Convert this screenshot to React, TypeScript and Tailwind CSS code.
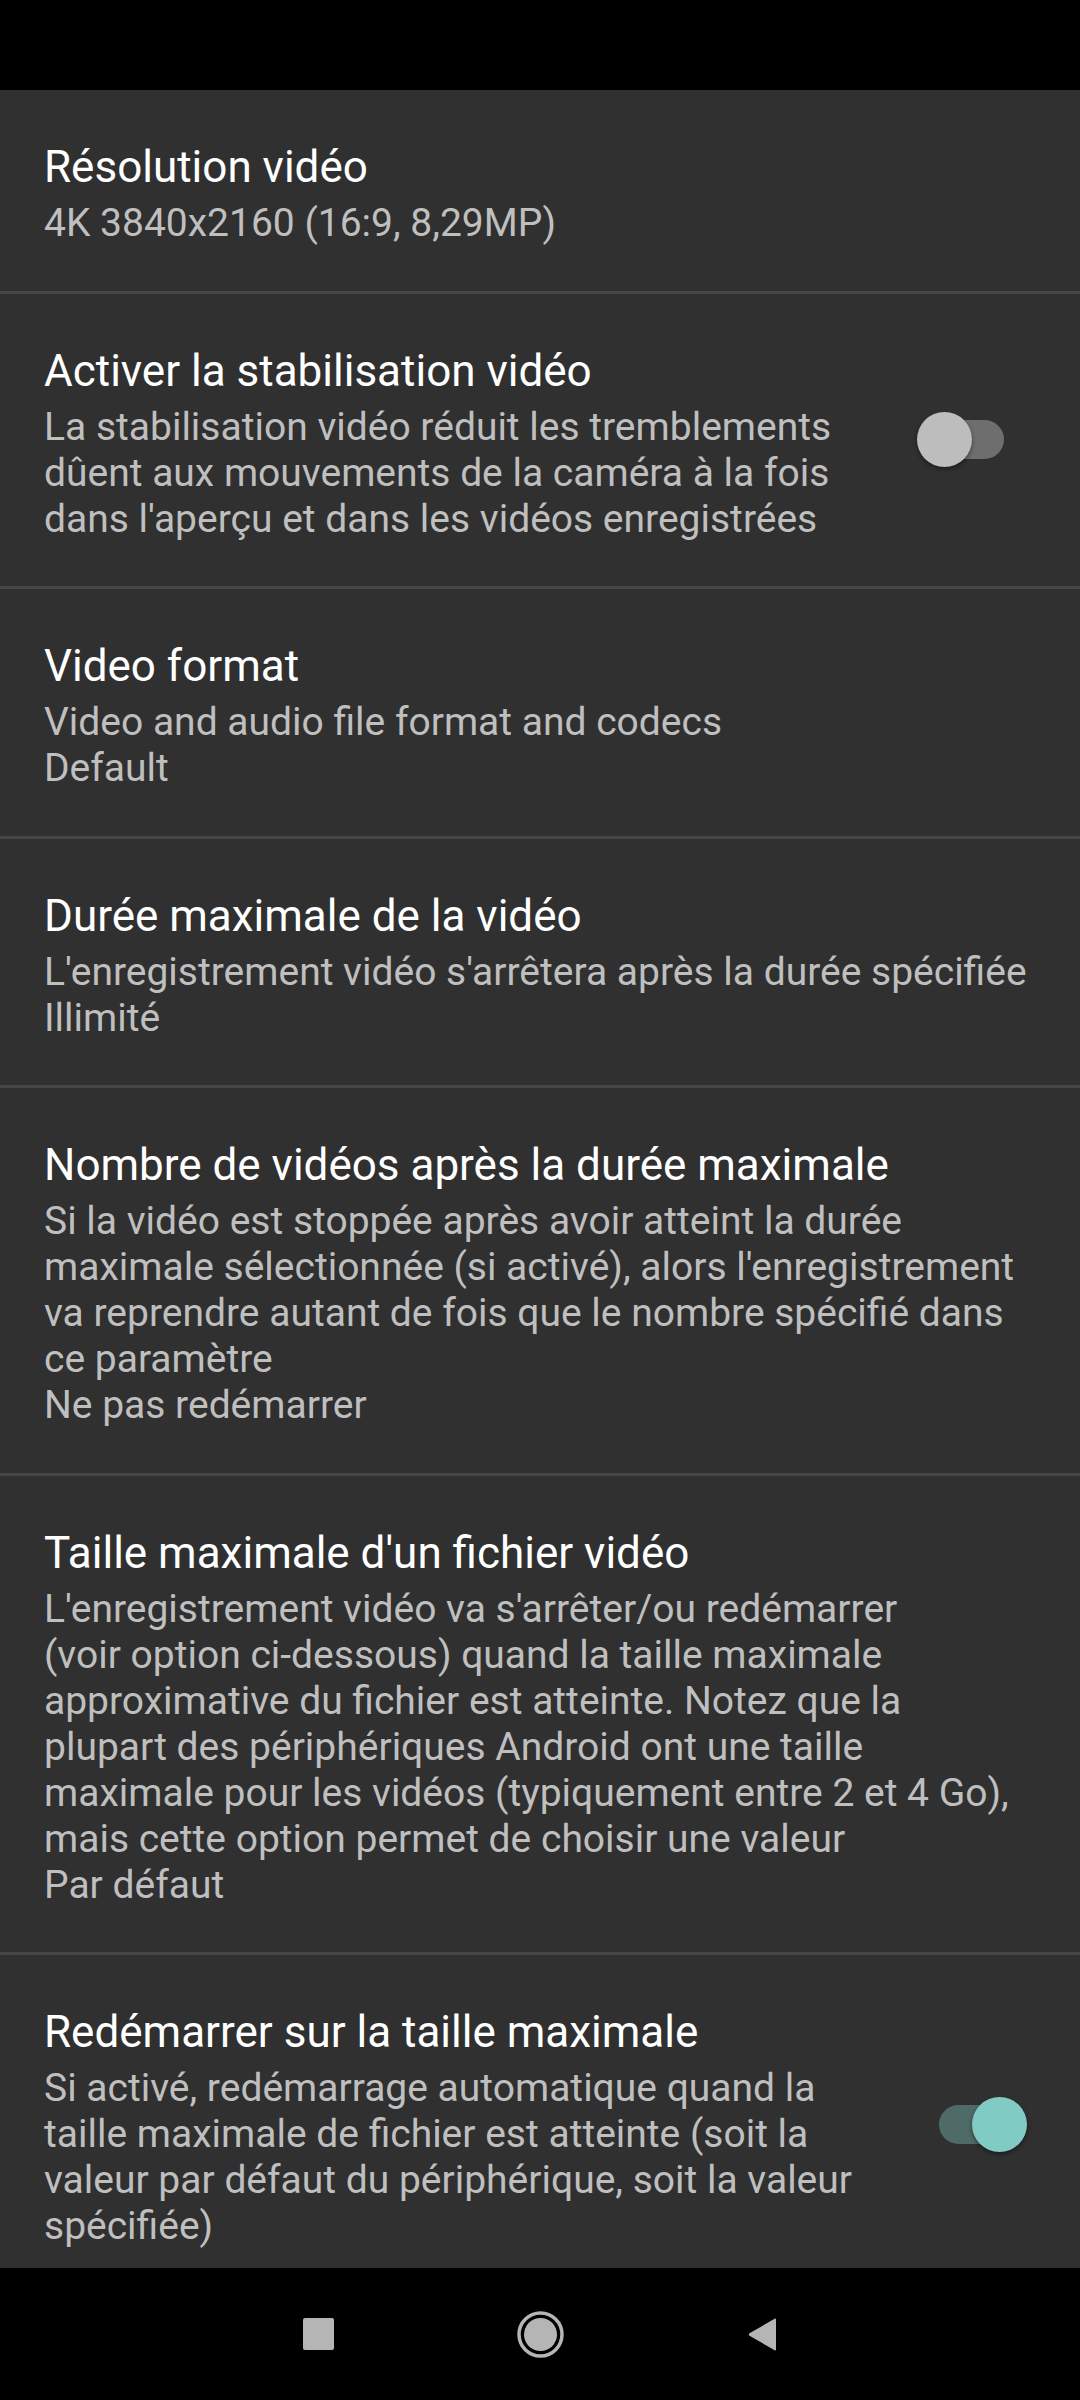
import React from 'react';

type Pref = {
  title: string;
  lines: string[];
  toggle?: 'off' | 'on';
};

const PREFS: Pref[] = [
  { title: 'Résolution vidéo', lines: ['4K 3840x2160 (16:9, 8,29MP)'] },
  {
    title: 'Activer la stabilisation vidéo',
    lines: [
      'La stabilisation vidéo réduit les tremblements',
      'dûent aux mouvements de la caméra à la fois',
      "dans l'aperçu et dans les vidéos enregistrées",
    ],
    toggle: 'off',
  },
  { title: 'Video format', lines: ['Video and audio file format and codecs', 'Default'] },
  {
    title: 'Durée maximale de la vidéo',
    lines: ["L'enregistrement vidéo s'arrêtera après la durée spécifiée", 'Illimité'],
  },
  {
    title: 'Nombre de vidéos après la durée maximale',
    lines: [
      'Si la vidéo est stoppée après avoir atteint la durée',
      "maximale sélectionnée (si activé), alors l'enregistrement",
      'va reprendre autant de fois que le nombre spécifié dans',
      'ce paramètre',
      'Ne pas redémarrer',
    ],
  },
  {
    title: "Taille maximale d'un fichier vidéo",
    lines: [
      "L'enregistrement vidéo va s'arrêter/ou redémarrer",
      '(voir option ci-dessous) quand la taille maximale',
      'approximative du fichier est atteinte. Notez que la',
      'plupart des périphériques Android ont une taille',
      'maximale pour les vidéos (typiquement entre 2 et 4 Go),',
      'mais cette option permet de choisir une valeur',
      'Par défaut',
    ],
  },
  {
    title: 'Redémarrer sur la taille maximale',
    lines: [
      'Si activé, redémarrage automatique quand la',
      'taille maximale de fichier est atteinte (soit la',
      'valeur par défaut du périphérique, soit la valeur',
      'spécifiée)',
    ],
    toggle: 'on',
  },
];

const Toggle = ({ on }: { on: boolean }) => (
  <div className={`relative w-[88px] h-[55px] shrink-0 ${on ? 'mr-[54px]' : 'mr-[75px]'}`}>
    <div
      className={`absolute left-[1px] top-[8px] w-[86px] h-[39px] rounded-full ${
        on ? 'bg-[#4f6b68]' : 'bg-[#6e6e6e]'
      }`}
    />
    <div
      className={`absolute top-0 w-[55px] h-[55px] rounded-full shadow-[0_2px_4px_rgba(0,0,0,0.45)] ${
        on ? 'left-[34px] bg-[#80cbc4]' : 'left-0 bg-[#bdbdbd]'
      }`}
    />
  </div>
);

const PrefRow = ({ pref, last }: { pref: Pref; last: boolean }) => (
  <div className={`flex items-center ${last ? '' : 'border-b-[3px] border-[#464646]'}`}>
    <div className="flex-1 pl-[44px] pt-[51px] pb-[44.5px] whitespace-nowrap">
      <div className="text-[44px] leading-[52px] text-white">{pref.title}</div>
      <div className="mt-[7px] text-[39px] leading-[46px] text-[#bfbfbf]">
        {pref.lines.map((l, i) => (
          <span key={i} className="block">
            {l}
          </span>
        ))}
      </div>
    </div>
    {pref.toggle && <Toggle on={pref.toggle === 'on'} />}
  </div>
);

export default function App() {
  return (
    <div className="w-[1080px] h-[2400px] flex flex-col bg-black font-['Roboto',sans-serif]">
      <div className="h-[90px] shrink-0 bg-black" />
      <div className="flex-1 overflow-hidden bg-[#303030]">
        {PREFS.map((p, i) => (
          <PrefRow key={p.title} pref={p} last={i === PREFS.length - 1} />
        ))}
      </div>
      <div className="h-[132px] shrink-0 bg-black flex items-center justify-center gap-[183px]">
        <div className="w-[31px] h-[32px] bg-[#b5b5b5] rounded-[2px]" />
        <svg width="47" height="47" viewBox="0 0 47 47">
          <circle cx="23.5" cy="23.5" r="21.5" fill="none" stroke="#b5b5b5" strokeWidth="3.5" />
          <circle cx="23.5" cy="23.5" r="16.5" fill="#b5b5b5" />
        </svg>
        <svg width="31" height="35" viewBox="0 0 31 35">
          <path d="M29 2.5 L29 32.5 Q29 34 27.6 33.2 L2.5 18.8 Q1 17.5 2.5 16.2 L27.6 1.8 Q29 1 29 2.5 Z" fill="#b5b5b5" />
        </svg>
      </div>
    </div>
  );
}
